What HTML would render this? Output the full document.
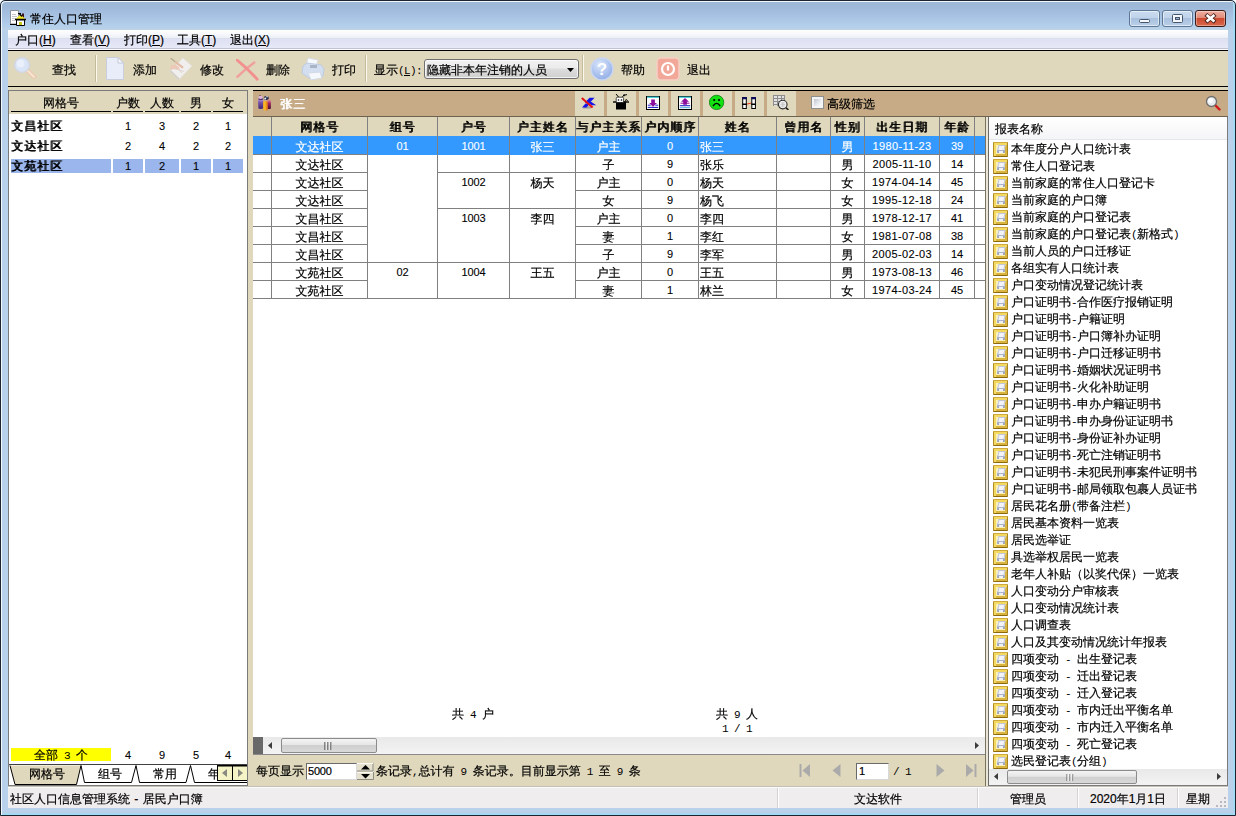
<!DOCTYPE html>
<html lang="zh-CN"><head><meta charset="utf-8"><title>常住人口管理</title>
<style>
html,body{margin:0;padding:0}
body{width:1236px;height:816px;position:relative;overflow:hidden;background:#fff;font:12px/12px "Liberation Sans","WenQuanYi Zen Hei","Noto Sans CJK SC",sans-serif;color:#000;-webkit-text-stroke-width:.2px}
div,span,i,b,u{box-sizing:border-box}
i{font-style:normal}
b{font-weight:normal;text-shadow:1px 0 0 currentColor;letter-spacing:1px}
#win{position:absolute;left:0;top:0;width:1236px;height:816px;border-radius:5px 5px 0 0;background:#b9d1ea;overflow:hidden}
#win>*{position:absolute}
#edge{left:0;top:0;width:1236px;height:816px;border:1px solid #1c2430;border-radius:5px 5px 0 0;box-shadow:inset 1px 1px 0 0 rgba(255,255,255,.85),inset -1px -1px 0 0 #9fdcf6,inset -2px -2px 0 0 #acd6f0}
#tb{left:0;top:0;width:1236px;height:30px;background:linear-gradient(#9fb8d6 0,#9db8d9 7px,#a6c1e1 15px,#b1ceeb 25px,#bdd3e7 30px)}
#tt{position:absolute;left:30px;top:13px;white-space:nowrap}
.wb{position:absolute;top:10px;width:31px;height:17px;border:1px solid #5d7694;border-radius:3px;background:linear-gradient(#c9dbef 0,#c0d3ea 45%,#a9c1de 50%,#b9cfe8 100%);box-shadow:inset 0 0 0 1px rgba(255,255,255,.55)}
.wb.cls{border-color:#3c1c18;background:linear-gradient(#eeb0a2 0,#e08a78 45%,#cd4a2f 50%,#d9694c 100%);box-shadow:inset 0 0 0 1px rgba(255,255,255,.35)}
#menu{left:8px;top:30px;width:1220px;height:20px;background:linear-gradient(#fff 0,#f7f8fc 4px,#eef0f8 7.500px,#d8dae8 8px,#dee1f2 9px,#e6e8f7 17.500px,#c2c3ce 18px,#c2c3ce 19px,#fcfcfe 19px)}
#menu span{position:absolute;top:4px;white-space:nowrap}
.bl{left:8px;width:1220px;height:1px;background:#000}
#tool{left:8px;top:51px;width:1220px;height:35px;background:#e0d8bc}
#tool>*{position:absolute}
#tool .t{top:13px;white-space:nowrap}
.sep{top:4px;width:2px;height:27px;border-left:1px solid #c4bb9c;border-right:1px solid #fbf8ee}
#main{left:8px;top:87px;width:1220px;height:699px;background:#e0d8bc}
/* left panel */
#lp{left:8px;top:90px;width:240px;height:696px;border:1px solid #7b7b7b;background:#fff}
#lp>*{position:absolute}
#lp .hd{left:0;top:0;width:238px;height:23px;background:#e0d8bc}
#lp .hd span{position:absolute;top:6px;text-align:center;height:15px;border-bottom:1px solid #000}
#lp .r{left:0;width:238px;height:14px}
#lp .r span{position:absolute;top:0;height:14px;line-height:14px;text-align:center}
#lp .r span.nm{text-align:left}
#lp .r.s span{background:#9bb6ec}
#lp .sum{left:2px;top:657px;width:100px;height:13px;background:#ff0;text-align:center;line-height:13px;padding-top:1px;white-space:pre}
/* centre */
#ct{left:253px;top:90px;width:975px;height:27px;background:#c6ab86;border-top:1px solid #000;border-bottom:1px solid #6d6250}
#ct>*{position:absolute}
#ct .bt{top:0;width:29px;height:25px;background:#e0d8bc}
#ct .bt svg{position:absolute;left:6px;top:3px}
#grid{left:253px;top:117px;width:733px;height:620px;background:#fff;border-right:1px solid #78735f}
#grid>*{position:absolute}
.gh{left:0;top:0;width:732px;height:19px;background:#e0d8bc}
.hc{position:absolute;top:0;height:19px;border-right:0;text-align:center;line-height:19px;padding-top:1px;white-space:nowrap;overflow:visible}
.gh .hc+.hc{box-shadow:-1px 0 0 #808080}
.gr{left:0;width:732px;height:19px}
.gr .c{position:absolute;top:0;height:19px;line-height:19px;padding-top:2px;text-align:center;border-bottom:1px solid #808080;box-shadow:-1px 0 0 #808080;white-space:nowrap}
.gr .c.ind{box-shadow:none}
.gr .c.d{padding-top:1px}
.gr .c.nb{border-bottom:0}
.gr .c.l{text-align:left;padding-left:1px}
.gr.sel .c{background:#3399ff;color:#fff}
.n{font-family:"Liberation Mono","WenQuanYi Zen Hei",monospace;font-size:11px;letter-spacing:-.6px;-webkit-text-stroke-width:0;white-space:pre}
.d{font-size:11px;letter-spacing:-.12px;-webkit-text-stroke-width:.1px}
.dt{letter-spacing:.36px}
.s11{font-size:11px;letter-spacing:-.2px}
/* right panel */
#rp{left:988px;top:117px;width:240px;height:669px;background:#fff;border:1px solid #7b7b7b;border-top:0;border-left:1px solid #6c6c64}
#rp>*{position:absolute}
#rp .rh{left:0;top:0;width:238px;height:23px;line-height:24px;padding-left:6px;background:linear-gradient(#fff,#f4f5f7);border-bottom:1px solid #e3e6ea}
.ri{left:4px;height:16px;white-space:nowrap}
.ri span{position:absolute;left:18px;top:1px}
.ic{position:absolute;left:0;top:0;width:15px;height:15px;border:1px solid;border-color:#cfa93e #a9851f #8c690b #b08c25;border-radius:1px;background:#fbf0b8;box-shadow:inset 1px 1px 0 1px #f3d862,inset -1px -1px 0 1px #d9b440}
.ic i{position:absolute;left:3px;top:5px;width:8px;height:5px;border-radius:2px 2px 1px 1px;background:linear-gradient(#c9cfe0,#8e98b4)}
.ic i::before{content:"";position:absolute;left:1px;top:-3px;width:5px;height:4px;background:#f3f4f9;border:1px solid #c2c6d4;border-bottom:0;transform:skewX(-12deg)}
.ic i::after{content:"";position:absolute;left:2px;top:3px;width:4px;height:2px;background:#eef0f6}
/* status */
#st{left:8px;top:786px;width:1220px;height:22px;background:#f0edee;border-top:1px solid #c4c0b6;box-shadow:inset 0 1px 0 #fbfafa}
#st span{position:absolute;top:6px;white-space:nowrap;word-spacing:1px}
#st i{position:absolute;top:1px;width:2px;height:20px;border-left:1px solid #d5d2d3;border-right:1px solid #fff}
/* scrollbars */
.sb{background:linear-gradient(#e9e9e9,#f3f3f3)}
.th{position:absolute;border:1px solid #8c8c8c;border-radius:2px;background:linear-gradient(#f4f4f4 0,#e6e6e6 45%,#cfcfcf 50%,#d9d9d9 100%)}
#cb{left:416px;top:8px;width:155px;height:20px;border:1px solid #707070;border-radius:3px;background:linear-gradient(#f2f2f2 0,#ebebeb 45%,#dddddd 50%,#cfcfcf 100%);box-shadow:inset 0 0 0 1px rgba(255,255,255,.7)}
#cb span{position:absolute;left:2px;top:4px;white-space:nowrap}
#cb svg{position:absolute;left:142px;top:8px}
.ft{text-align:center;white-space:pre}
#pg>*{position:absolute;white-space:pre}
.inp{background:#fff;border:1px solid #6a6a6a;border-right-color:#d8d8d8;border-bottom-color:#d8d8d8}
.inp span{position:absolute}

</style></head>
<body>
<div id="win">
<div id="tb">
<svg style="position:absolute;left:10px;top:10px" width="17" height="17" viewBox="0 0 17 17"><path d="M.500 .500H8.500V14H.500Z" fill="#fdfdfd" stroke="#8a8f98" stroke-width="1"/><path d="M0 14.500H9" stroke="#000" stroke-width="1.200"/><path d="M2 4.500H6M2 6.500H7M2 8.500H6M2 10.500H5" stroke="#b4b8c0" stroke-width=".8"/><path d="M12 3.500H14V8H12Z" fill="#3a1418"/><path d="M8 3.500H11" stroke="#000" stroke-width="1.200"/><path d="M10.500 4.500 15.500 9.500H5.500Z" fill="#f2ea2c" stroke="#e8e040" stroke-width=".5"/><path d="M9.500 4 12 6.500" stroke="#000" stroke-width="1.400"/><path d="M5 9.500H16" stroke="#000" stroke-width="1.300"/><path d="M6.500 10H14.500V15.500H6.500Z" fill="#fff" stroke="#000" stroke-width="1"/><path d="M9 12H12V15H9Z" fill="#c8c81a"/></svg>
<span id="tt">常住人口管理</span>
<div class="wb" style="left:1129px"><svg width="29" height="15" style="position:absolute;left:0;top:0"><rect x="9.500" y="8.500" width="10" height="3" rx="1" fill="#f4f7fb" stroke="#45556b"/></svg></div>
<div class="wb" style="left:1162px"><svg width="29" height="15" style="position:absolute;left:0;top:0"><rect x="9.500" y="3.500" width="10" height="8" rx="1" fill="#f4f7fb" stroke="#45556b"/><rect x="12.500" y="6.500" width="4" height="2" fill="#9fb6d2" stroke="#45556b"/></svg></div>
<div class="wb cls" style="left:1195px"><svg width="29" height="15" style="position:absolute;left:0;top:0"><path d="M9.800 3.500 19.200 11.200M19.200 3.500 9.800 11.200" stroke="#4a2420" stroke-width="4.200" stroke-linecap="butt"/><path d="M10.600 4.100 18.400 10.600M18.400 4.100 10.600 10.600" stroke="#fff" stroke-width="2.600" stroke-linecap="butt"/></svg></div>
</div>
<div id="menu"><span style="left:7px">户口(<u>H</u>)</span><span style="left:62px">查看(<u>V</u>)</span><span style="left:116px">打印(<u>P</u>)</span><span style="left:169px">工具(<u>T</u>)</span><span style="left:222px">退出(<u>X</u>)</span></div>
<div class="bl" style="top:50px"></div>
<div id="tool">
<svg style="left:5px;top:5px" width="24" height="24" viewBox="0 0 24 24"><path d="M13.500 13.500 21 21" stroke="#e9c9ae" stroke-width="4.500" stroke-linecap="round"/><path d="M13.500 13.500 21 21" stroke="#f6e4d3" stroke-width="2" stroke-linecap="round"/><circle cx="9" cy="9" r="7.500" fill="#d9e4f7" stroke="#d3d6de" stroke-width="1.500"/><circle cx="7.500" cy="7.500" r="4" fill="#eaf0fb"/></svg>
<span class="t" style="left:44px">查找</span>
<i class="sep" style="left:87px"></i>
<svg style="left:98px;top:6px" width="19" height="24" viewBox="0 0 19 24"><path d="M.500 .500H12L17.500 6V22.500H.500Z" fill="#e9edfa" stroke="#c9cedd"/><path d="M12 .500V6H17.500Z" fill="#f6f8fd" stroke="#c3c8d6"/></svg>
<span class="t" style="left:125px">添加</span>
<svg style="left:160px;top:6px" width="26" height="25" viewBox="0 0 26 25"><path d="M1.800 14.400 14.900 .800 24.100 9.100 10.500 23.200Z" fill="#f1efee" stroke="#dddad2" stroke-width=".8"/><path d="M1.800 14.400 10.500 23.200 11.500 21.500 3 13.200Z" fill="#d3d0c8"/><path d="M6 11.500 16 14.500M8 9.500 14 16" stroke="#dcd6d2" stroke-width="1"/><path d="M2.500 8.500Q7 6.500 10.500 9.500L12 12.500Q7 11.500 2.500 12.500Z" fill="#ecc8b6"/><path d="M2.700 1.300 14.400 10.200" stroke="#b0a58e" stroke-width="1.300"/><path d="M7 4.500 15 10.800" stroke="#e6bca8" stroke-width="2.200"/></svg>
<span class="t" style="left:192px">修改</span>
<svg style="left:228px;top:8px" width="23" height="22" viewBox="0 0 23 22"><path d="M18.300 3.400Q9 10 1.300 17.800" stroke="#f0a09c" stroke-width="2.400" stroke-linecap="round" fill="none"/><path d="M.800 .800Q11 9 21.200 20.200" stroke="#f28f8f" stroke-width="2.800" stroke-linecap="round" fill="none"/></svg>
<span class="t" style="left:258px">删除</span>
<svg style="left:293px;top:6px" width="24" height="24" viewBox="0 0 24 24"><path d="M7 1 17 3 15 10 5 8Z" fill="#f7f9fc" stroke="#d5dbe6"/><path d="M2 9 6 6 20 8 23 12 22 19 8 21 1 16Z" fill="#d3dff0" stroke="#bccbe2"/><path d="M9 8h7v3h-7z" fill="#aab4c4"/><path d="M7 16 19 15 21 21 10 23Z" fill="#f4f7fb" stroke="#d2d9e5"/></svg>
<span class="t" style="left:324px">打印</span>
<i class="sep" style="left:357px"></i>
<span class="t" style="left:366px">显示<i class="n">(<u>L</u>):</i></span>
<div id="cb"><span>隐藏非本年注销的人员</span><svg width="7" height="4" viewBox="0 0 7 4"><path d="M0 0H7L3.500 4Z" fill="#000"/></svg></div>
<i class="sep" style="left:574px"></i>
<svg style="left:582px;top:6px" width="24" height="24" viewBox="0 0 24 24"><defs><radialGradient id="hg" cx=".4" cy=".3" r=".8"><stop offset="0" stop-color="#dbe6fa"/><stop offset=".6" stop-color="#a9c0ee"/><stop offset="1" stop-color="#8aa8e2"/></radialGradient></defs><circle cx="12" cy="12" r="11" fill="url(#hg)" stroke="#c9d6f0" stroke-width="1.500"/><text x="12" y="18" text-anchor="middle" font-family="Liberation Sans,sans-serif" font-weight="bold" font-size="17" fill="#fff">?</text></svg>
<span class="t" style="left:613px">帮助</span>
<svg style="left:648px;top:6px" width="24" height="24" viewBox="0 0 24 24"><rect x="1" y="1" width="22" height="22" rx="4" fill="#f2a898" stroke="#f6cfc4" stroke-width="1.500"/><circle cx="12" cy="12" r="6" fill="none" stroke="#fff" stroke-width="2.200"/><path d="M12 8.500V13.500" stroke="#fff" stroke-width="2.200"/></svg>
<span class="t" style="left:679px">退出</span>
</div>
<div class="bl" style="top:86px"></div>
<div id="main"></div>
<div id="lp">
<div class="hd"><span style="left:2px;width:100px">网格号</span><span style="left:104px;width:30px">户数</span><span style="left:136px;width:34px">人数</span><span style="left:172px;width:30px">男</span><span style="left:204px;width:30px">女</span></div>
<div class="r" style="top:28px"><span class="nm" style="left:2px;width:100px"><b>文昌社区</b></span><span class="d" style="left:104px;width:30px">1</span><span class="d" style="left:136px;width:34px">3</span><span class="d" style="left:172px;width:30px">2</span><span class="d" style="left:204px;width:30px">1</span></div>
<div class="r" style="top:48px"><span class="nm" style="left:2px;width:100px"><b>文达社区</b></span><span class="d" style="left:104px;width:30px">2</span><span class="d" style="left:136px;width:34px">4</span><span class="d" style="left:172px;width:30px">2</span><span class="d" style="left:204px;width:30px">2</span></div>
<div class="r s" style="top:68px"><span class="nm" style="left:2px;width:100px"><b>文苑社区</b></span><span class="d" style="left:104px;width:30px">1</span><span class="d" style="left:136px;width:34px">2</span><span class="d" style="left:172px;width:30px">1</span><span class="d" style="left:204px;width:30px">1</span></div>
<div class="sum">全部<i class="n"> 3 </i>个</div>
<div class="r" style="top:657px"><span class="d" style="left:104px;width:30px">4</span><span class="d" style="left:136px;width:34px">9</span><span class="d" style="left:172px;width:30px">5</span><span class="d" style="left:204px;width:30px">4</span></div>
<div style="left:0;top:673px;width:238px;height:1px;background:#404040"></div>
<svg style="left:0;top:674px" width="238" height="21" viewBox="0 0 238 21"><path d="M1 .500 6 19.500H67.500L72 .500" fill="#e0d8bc" stroke="#000"/><path d="M72 .500 75.500 17.500H122.500L127 .500 130.500 17.500H177L181.500 .500 185.500 17.500H238" fill="none" stroke="#000"/></svg>
<span style="left:20px;top:677px">网格号</span><span style="left:89px;top:677px">组号</span><span style="left:144px;top:677px">常用</span><span style="left:199px;top:677px">年</span>
<div style="left:208px;top:674px;width:30px;height:16px;border:1px solid #000;border-right:0;background:#000"><svg style="position:absolute;left:0;top:0" width="29" height="14" viewBox="0 0 29 14"><rect x="0" y=".500" width="14" height="13.500" fill="#f4f4c6"/><rect x="15" y=".500" width="14" height="13.500" fill="#f4f4c6"/><path d="M9 3V11L4 7Z" fill="#8a8a80"/><path d="M20 3V11L25 7Z" fill="#8a8a80"/></svg></div>
</div>
<div id="ct">
<svg style="left:4px;top:4px" width="16" height="17" viewBox="0 0 16 17"><defs><linearGradient id="g1" x1="0" y1="0" x2="0" y2="1"><stop offset="0" stop-color="#c9a0dc"/><stop offset=".35" stop-color="#7a55a8"/><stop offset="1" stop-color="#3e2270"/></linearGradient><linearGradient id="g2" x1="0" y1="0" x2="1" y2="0"><stop offset="0" stop-color="#f0a020"/><stop offset=".4" stop-color="#f8c028"/><stop offset="1" stop-color="#e05a18"/></linearGradient><linearGradient id="g3" x1="0" y1="0" x2="0" y2="1"><stop offset="0" stop-color="#e88aa0"/><stop offset=".4" stop-color="#a02860"/><stop offset="1" stop-color="#4a1030"/></linearGradient></defs><path d="M10.400 5.500Q12.500 3.800 13.900 6V13.500Q12 14.500 10.400 13.500Z" fill="url(#g3)"/><ellipse cx="3.500" cy="2.400" rx="2.100" ry="1.700" fill="#e2b4e0"/><path d="M2 .500 3 -.500 4 .800" fill="#3a2a4a"/><path d="M1 4.500Q3.500 3 6.200 4.500V13.600Q3.500 14.500 1.400 13.600Z" fill="url(#g1)"/><path d="M1.500 4Q3.500 5 6 4" stroke="#2e1a55" stroke-width="1" fill="none"/><path d="M6 7Q8.500 5 10.800 7V15Q8.500 16.200 6.300 15Z" fill="url(#g2)"/><ellipse cx="9.300" cy="3" rx="2.600" ry="2.100" fill="#252848"/><circle cx="8.200" cy="3.600" r="1" fill="#f4f4fa"/><circle cx="10" cy="1.800" r=".8" fill="#e8e8f4"/></svg>
<span style="left:27px;top:7px;color:#fff;white-space:nowrap"><b>张三</b></span>
<div class="bt" style="left:322px"><svg width="16" height="16" viewBox="0 0 16 16"><path d="M1.500 14.500 4 12.500H11.500L9.500 14.500Z" fill="#9c9c9c"/><path d="M8.500 3.800H13.600L8.800 8.800H3.700Z" fill="#1616e8"/><path d="M6 8H10.500L15.200 11.200H10.700Z" fill="#1616e8"/><path d="M4.500 9.500H9L5.500 13.400H1Z" fill="#1616e8"/><path d="M.800 4 11.600 13.400" stroke="#e61212" stroke-width="2"/></svg></div>
<div class="bt" style="left:354px"><svg width="16" height="16" viewBox="0 0 16 16"><path d="M3 7.500H13V15.500H3Z" fill="#000"/><path d="M0 8H16" stroke="#000" stroke-width="1.400"/><path d="M3.200 8.500V4.600Q3.200 3.200 4.600 3.200H9.200Q10.600 3.200 10.600 4.600V8.500Z" fill="#fff" stroke="#000" stroke-width=".7"/><path d="M3 0 5.500 3M11.500 0 9.500 3M11 2 13 .500 14 1" stroke="#000" stroke-width="1" fill="none"/><circle cx="5.500" cy="6" r=".8" fill="#000"/><circle cx="8.500" cy="6" r=".8" fill="#000"/><path d="M12 6.500Q14 4.500 14.500 7" stroke="#000" stroke-width="1" fill="none"/></svg></div>
<div class="bt" style="left:386px"><svg width="16" height="16" viewBox="0 0 16 16"><rect x="1.500" y="2.500" width="13" height="13" fill="#fff" stroke="#000"/><path d="M2 3.200H14" stroke="#3cc8d2" stroke-width="1.300"/><path d="M6.200 5.500H9.900V9H12L8 12.800 4.100 9H6.200Z" fill="#8c0c9c"/><path d="M2.800 11.200H5.700M10.300 11.200H13.200" stroke="#2222c8" stroke-width="1"/><path d="M2.800 13.400H13.200" stroke="#2222c8" stroke-width="1.100"/></svg></div>
<div class="bt" style="left:418px"><svg width="16" height="16" viewBox="0 0 16 16"><rect x="1.500" y="2.500" width="13" height="13" fill="#fff" stroke="#000"/><path d="M2 3.200H14" stroke="#3cc8d2" stroke-width="1.300"/><path d="M8 4 12 7.800H9.900V10.700H6.200V7.800H4.100Z" fill="#8c0c9c"/><path d="M3.500 9.200H12.500" stroke="#8c0c9c" stroke-width="1"/><path d="M2.800 11.700H13.200" stroke="#2222c8" stroke-width="1.100"/><path d="M2.800 13.700H13.200" stroke="#4aa8dc" stroke-width="1"/></svg></div>
<div class="bt" style="left:450px"><svg width="16" height="16" viewBox="0 0 16 16"><circle cx="7.600" cy="8.400" r="7.200" fill="#12e212" stroke="#0c7c0c" stroke-width=".8"/><circle cx="5.200" cy="6" r="1.100" fill="#000"/><circle cx="10" cy="6" r="1.100" fill="#000"/><path d="M4 12Q7.600 6.800 11.200 12" fill="none" stroke="#000" stroke-width="1.400"/></svg></div>
<div class="bt" style="left:482px"><svg width="16" height="16" viewBox="0 0 16 16"><path d="M5.500 10.200 10.500 9" stroke="#e8401c" stroke-width="1"/><rect x="1.700" y="3.500" width="3.600" height="11" fill="#fff" stroke="#000"/><rect x="10.800" y="3.500" width="3.600" height="11" fill="#fff" stroke="#000"/><path d="M1.200 4.200H5.800M10.300 4.200H14.900" stroke="#0c0c5a" stroke-width="2.200"/><path d="M1.200 10.200H5.800M10.300 10.200H14.900" stroke="#000" stroke-width="1.600"/></svg></div>
<div class="bt" style="left:514px"><svg width="16" height="16" viewBox="0 0 16 16"><rect x=".500" y="1.500" width="11" height="10" fill="#e2e2e2"/><path d="M0 1.500H12M0 4.500H12M0 7.500H12M0 10.500H7M.500 1V12M4.500 1V12M8.500 1V8M11.500 1V7" stroke="#8e8e8e" stroke-width="1" fill="none"/><circle cx="9.750" cy="10.600" r="4.300" fill="#f1f1f1" stroke="#2c2c2c" stroke-width="1.100"/><path d="M7.200 10.600H12.300M9.750 8V13.200M7.800 9H11.700M7.800 12.200H11.700" stroke="#bdbdbd" stroke-width=".7"/><path d="M13 13.800 15.400 15.900" stroke="#1c1c1c" stroke-width="1.600"/></svg></div>
<div style="left:558px;top:5px;width:13px;height:13px;border:1px solid #8e8f8f;background:#f4f4f4;padding:0"><div style="position:absolute;left:2px;top:2px;width:7px;height:7px;background:linear-gradient(135deg,#bfc4cf,#e4e7ec 55%,#fafbfc)"></div></div>
<span style="left:574px;top:7px;white-space:nowrap">高级筛选</span>
<svg style="left:952px;top:4px" width="16" height="16" viewBox="0 0 16 16"><path d="M9.500 9.500 14.500 14.500" stroke="#d01818" stroke-width="2.400" stroke-linecap="round"/><circle cx="6.500" cy="6.500" r="5" fill="#e8ecef" stroke="#6e6e6e" stroke-width="1.300"/><circle cx="5.500" cy="5.500" r="2.500" fill="#fafcfd"/></svg>
</div>
<div id="grid">
<div class="gh"><div class="hc" style="left:0px;width:18px"><b></b></div><div class="hc" style="left:19px;width:95px"><b>网格号</b></div><div class="hc" style="left:115px;width:69px"><b>组号</b></div><div class="hc" style="left:185px;width:71px"><b>户号</b></div><div class="hc" style="left:257px;width:65px"><b>户主姓名</b></div><div class="hc" style="left:323px;width:65px"><b>与户主关系</b></div><div class="hc" style="left:389px;width:56px"><b>户内顺序</b></div><div class="hc" style="left:446px;width:77px"><b>姓名</b></div><div class="hc" style="left:524px;width:53px"><b>曾用名</b></div><div class="hc" style="left:578px;width:33px"><b>性别</b></div><div class="hc" style="left:612px;width:74px"><b>出生日期</b></div><div class="hc" style="left:687px;width:34px"><b>年龄</b></div><div class="hc" style="left:722px;width:10px"><b></b></div></div>
<div class="gr sel" style="top:19px"><div class="c ind" style="left:0;width:18px"></div><div class="c" style="left:19px;width:95px">文达社区</div><div class="c nb d" style="left:115px;width:69px">01</div><div class="c nb d" style="left:185px;width:71px">1001</div><div class="c nb" style="left:257px;width:65px">张三</div><div class="c" style="left:323px;width:65px">户主</div><div class="c d" style="left:389px;width:56px">0</div><div class="c l" style="left:446px;width:77px">张三</div><div class="c" style="left:524px;width:53px"></div><div class="c" style="left:578px;width:33px">男</div><div class="c d dt" style="left:612px;width:74px">1980-11-23</div><div class="c d" style="left:687px;width:34px">39</div><div class="c" style="left:722px;width:10px"></div></div>
<div class="gr" style="top:37px"><div class="c ind" style="left:0;width:18px"></div><div class="c" style="left:19px;width:95px">文达社区</div><div class="c nb d" style="left:115px;width:69px"></div><div class="c d" style="left:185px;width:71px"></div><div class="c" style="left:257px;width:65px"></div><div class="c" style="left:323px;width:65px">子</div><div class="c d" style="left:389px;width:56px">9</div><div class="c l" style="left:446px;width:77px">张乐</div><div class="c" style="left:524px;width:53px"></div><div class="c" style="left:578px;width:33px">男</div><div class="c d dt" style="left:612px;width:74px">2005-11-10</div><div class="c d" style="left:687px;width:34px">14</div><div class="c" style="left:722px;width:10px"></div></div>
<div class="gr" style="top:55px"><div class="c ind" style="left:0;width:18px"></div><div class="c" style="left:19px;width:95px">文达社区</div><div class="c nb d" style="left:115px;width:69px"></div><div class="c nb d" style="left:185px;width:71px">1002</div><div class="c nb" style="left:257px;width:65px">杨天</div><div class="c" style="left:323px;width:65px">户主</div><div class="c d" style="left:389px;width:56px">0</div><div class="c l" style="left:446px;width:77px">杨天</div><div class="c" style="left:524px;width:53px"></div><div class="c" style="left:578px;width:33px">女</div><div class="c d dt" style="left:612px;width:74px">1974-04-14</div><div class="c d" style="left:687px;width:34px">45</div><div class="c" style="left:722px;width:10px"></div></div>
<div class="gr" style="top:73px"><div class="c ind" style="left:0;width:18px"></div><div class="c" style="left:19px;width:95px">文达社区</div><div class="c nb d" style="left:115px;width:69px"></div><div class="c d" style="left:185px;width:71px"></div><div class="c" style="left:257px;width:65px"></div><div class="c" style="left:323px;width:65px">女</div><div class="c d" style="left:389px;width:56px">9</div><div class="c l" style="left:446px;width:77px">杨飞</div><div class="c" style="left:524px;width:53px"></div><div class="c" style="left:578px;width:33px">女</div><div class="c d dt" style="left:612px;width:74px">1995-12-18</div><div class="c d" style="left:687px;width:34px">24</div><div class="c" style="left:722px;width:10px"></div></div>
<div class="gr" style="top:91px"><div class="c ind" style="left:0;width:18px"></div><div class="c" style="left:19px;width:95px">文昌社区</div><div class="c nb d" style="left:115px;width:69px"></div><div class="c nb d" style="left:185px;width:71px">1003</div><div class="c nb" style="left:257px;width:65px">李四</div><div class="c" style="left:323px;width:65px">户主</div><div class="c d" style="left:389px;width:56px">0</div><div class="c l" style="left:446px;width:77px">李四</div><div class="c" style="left:524px;width:53px"></div><div class="c" style="left:578px;width:33px">男</div><div class="c d dt" style="left:612px;width:74px">1978-12-17</div><div class="c d" style="left:687px;width:34px">41</div><div class="c" style="left:722px;width:10px"></div></div>
<div class="gr" style="top:109px"><div class="c ind" style="left:0;width:18px"></div><div class="c" style="left:19px;width:95px">文昌社区</div><div class="c nb d" style="left:115px;width:69px"></div><div class="c nb d" style="left:185px;width:71px"></div><div class="c nb" style="left:257px;width:65px"></div><div class="c" style="left:323px;width:65px">妻</div><div class="c d" style="left:389px;width:56px">1</div><div class="c l" style="left:446px;width:77px">李红</div><div class="c" style="left:524px;width:53px"></div><div class="c" style="left:578px;width:33px">女</div><div class="c d dt" style="left:612px;width:74px">1981-07-08</div><div class="c d" style="left:687px;width:34px">38</div><div class="c" style="left:722px;width:10px"></div></div>
<div class="gr" style="top:127px"><div class="c ind" style="left:0;width:18px"></div><div class="c" style="left:19px;width:95px">文昌社区</div><div class="c d" style="left:115px;width:69px"></div><div class="c d" style="left:185px;width:71px"></div><div class="c" style="left:257px;width:65px"></div><div class="c" style="left:323px;width:65px">子</div><div class="c d" style="left:389px;width:56px">9</div><div class="c l" style="left:446px;width:77px">李军</div><div class="c" style="left:524px;width:53px"></div><div class="c" style="left:578px;width:33px">男</div><div class="c d dt" style="left:612px;width:74px">2005-02-03</div><div class="c d" style="left:687px;width:34px">14</div><div class="c" style="left:722px;width:10px"></div></div>
<div class="gr" style="top:145px"><div class="c ind" style="left:0;width:18px"></div><div class="c" style="left:19px;width:95px">文苑社区</div><div class="c nb d" style="left:115px;width:69px">02</div><div class="c nb d" style="left:185px;width:71px">1004</div><div class="c nb" style="left:257px;width:65px">王五</div><div class="c" style="left:323px;width:65px">户主</div><div class="c d" style="left:389px;width:56px">0</div><div class="c l" style="left:446px;width:77px">王五</div><div class="c" style="left:524px;width:53px"></div><div class="c" style="left:578px;width:33px">男</div><div class="c d dt" style="left:612px;width:74px">1973-08-13</div><div class="c d" style="left:687px;width:34px">46</div><div class="c" style="left:722px;width:10px"></div></div>
<div class="gr" style="top:163px"><div class="c ind" style="left:0;width:18px"></div><div class="c" style="left:19px;width:95px">文苑社区</div><div class="c d" style="left:115px;width:69px"></div><div class="c d" style="left:185px;width:71px"></div><div class="c" style="left:257px;width:65px"></div><div class="c" style="left:323px;width:65px">妻</div><div class="c d" style="left:389px;width:56px">1</div><div class="c l" style="left:446px;width:77px">林兰</div><div class="c" style="left:524px;width:53px"></div><div class="c" style="left:578px;width:33px">女</div><div class="c d dt" style="left:612px;width:74px">1974-03-24</div><div class="c d" style="left:687px;width:34px">45</div><div class="c" style="left:722px;width:10px"></div></div>
</div>
<span class="ft" style="left:437px;top:708px;width:72px">共<i class="n"> 4 </i>户</span>
<span class="ft" style="left:698px;top:708px;width:78px">共<i class="n"> 9 </i>人</span>
<span class="ft" style="left:698px;top:722px;width:78px"><i class="n">1 / 1</i></span>
<div id="hs" class="sb" style="left:253px;top:737px;width:733px;height:17px">
<div style="position:absolute;left:0;top:0;width:10px;height:17px;background:#696969"></div>
<svg style="position:absolute;left:15px;top:5px" width="4" height="7" viewBox="0 0 4 7"><path d="M4 0V7L0 3.500Z" fill="#3c3c3c"/></svg>
<div class="th" style="left:28px;top:1px;width:96px;height:15px"><svg style="position:absolute;left:42px;top:3px" width="8" height="8" viewBox="0 0 8 8"><path d="M1 0V8M4 0V8M7 0V8" stroke="#4a4a4a" stroke-width="1.200"/><path d="M2 0V8M5 0V8M8 0V8" stroke="#fff" stroke-width=".8"/></svg></div>
<svg style="position:absolute;left:722px;top:5px" width="4" height="7" viewBox="0 0 4 7"><path d="M0 0V7L4 3.500Z" fill="#3c3c3c"/></svg>
</div>
<div style="left:253px;top:754px;width:733px;height:1px;background:#8a8a8a"></div>
<div style="left:985px;top:117px;width:1px;height:669px;background:#78735f"></div><div style="left:986px;top:117px;width:2px;height:669px;background:#e9e5d8"></div>
<div id="pg" style="left:253px;top:755px;width:732px;height:31px">
<span style="left:3px;top:10px">每页显示</span>
<div class="inp" style="left:53px;top:8px;width:51px;height:17px"><span class="s11" style="left:1px;top:1px">5000</span></div>
<div class="spn" style="left:104px;top:8px"><svg width="17" height="17" viewBox="0 0 17 17"><rect x="0" y="0" width="17" height="17" fill="#e6e1cf"/><path d="M0 8H16M16 0V8" stroke="#8e8b80" stroke-width="1" fill="none"/><path d="M0 16.500H16.500V9" stroke="#8e8b80" stroke-width="1" fill="none"/><path d="M0 .500H16M0 9.500H16" stroke="#fbfaf4" stroke-width="1"/><path d="M4 6.500H13L8.500 2Z" fill="#000"/><path d="M4 11H13L8.500 15.500Z" fill="#000"/></svg></div>
<span style="left:123px;top:10px">条记录<i class="n" style="letter-spacing:-3.300px">, </i>总计有<i class="n"> 9 </i>条记录。目前显示第<i class="n"> 1 </i>至<i class="n"> 9 </i>条</span>
<svg style="left:546px;top:9px" width="12" height="13" viewBox="0 0 12 13"><path d="M1.500 0V13" stroke="#aaa" stroke-width="2"/><path d="M11 0V13L3.500 6.500Z" fill="#aaa"/></svg>
<svg style="left:579px;top:9px" width="9" height="13" viewBox="0 0 9 13"><path d="M8.500 0V13L.500 6.500Z" fill="#aaa"/></svg>
<div class="inp" style="left:603px;top:8px;width:33px;height:17px"><span class="s11" style="left:2px;top:1px">1</span></div>
<span style="left:640px;top:10px"><i class="n">/ 1</i></span>
<svg style="left:683px;top:9px" width="9" height="13" viewBox="0 0 9 13"><path d="M.500 0V13L8.500 6.500Z" fill="#aaa"/></svg>
<svg style="left:712px;top:9px" width="12" height="13" viewBox="0 0 12 13"><path d="M10.500 0V13" stroke="#aaa" stroke-width="2"/><path d="M1 0V13L8.500 6.500Z" fill="#aaa"/></svg>
</div>
<div id="rp"><div class="rh">报表名称</div>
<div class="ri" style="top:25px"><i class="ic"><i></i></i><span>本年度分户人口统计表</span></div>
<div class="ri" style="top:42px"><i class="ic"><i></i></i><span>常住人口登记表</span></div>
<div class="ri" style="top:59px"><i class="ic"><i></i></i><span>当前家庭的常住人口登记卡</span></div>
<div class="ri" style="top:76px"><i class="ic"><i></i></i><span>当前家庭的户口簿</span></div>
<div class="ri" style="top:93px"><i class="ic"><i></i></i><span>当前家庭的户口登记表</span></div>
<div class="ri" style="top:110px"><i class="ic"><i></i></i><span>当前家庭的户口登记表<i class="n">(</i>新格式<i class="n">)</i></span></div>
<div class="ri" style="top:127px"><i class="ic"><i></i></i><span>当前人员的户口迁移证</span></div>
<div class="ri" style="top:144px"><i class="ic"><i></i></i><span>各组实有人口统计表</span></div>
<div class="ri" style="top:161px"><i class="ic"><i></i></i><span>户口变动情况登记统计表</span></div>
<div class="ri" style="top:178px"><i class="ic"><i></i></i><span>户口证明书<i class="n">-</i>合作医疗报销证明</span></div>
<div class="ri" style="top:195px"><i class="ic"><i></i></i><span>户口证明书<i class="n">-</i>户籍证明</span></div>
<div class="ri" style="top:212px"><i class="ic"><i></i></i><span>户口证明书<i class="n">-</i>户口簿补办证明</span></div>
<div class="ri" style="top:229px"><i class="ic"><i></i></i><span>户口证明书<i class="n">-</i>户口迁移证明书</span></div>
<div class="ri" style="top:246px"><i class="ic"><i></i></i><span>户口证明书<i class="n">-</i>婚姻状况证明书</span></div>
<div class="ri" style="top:263px"><i class="ic"><i></i></i><span>户口证明书<i class="n">-</i>火化补助证明</span></div>
<div class="ri" style="top:280px"><i class="ic"><i></i></i><span>户口证明书<i class="n">-</i>申办户籍证明书</span></div>
<div class="ri" style="top:297px"><i class="ic"><i></i></i><span>户口证明书<i class="n">-</i>申办身份证证明书</span></div>
<div class="ri" style="top:314px"><i class="ic"><i></i></i><span>户口证明书<i class="n">-</i>身份证补办证明</span></div>
<div class="ri" style="top:331px"><i class="ic"><i></i></i><span>户口证明书<i class="n">-</i>死亡注销证明书</span></div>
<div class="ri" style="top:348px"><i class="ic"><i></i></i><span>户口证明书<i class="n">-</i>未犯民刑事案件证明书</span></div>
<div class="ri" style="top:365px"><i class="ic"><i></i></i><span>户口证明书<i class="n">-</i>邮局领取包裹人员证书</span></div>
<div class="ri" style="top:382px"><i class="ic"><i></i></i><span>居民花名册<i class="n">(</i>带备注栏<i class="n">)</i></span></div>
<div class="ri" style="top:399px"><i class="ic"><i></i></i><span>居民基本资料一览表</span></div>
<div class="ri" style="top:416px"><i class="ic"><i></i></i><span>居民选举证</span></div>
<div class="ri" style="top:433px"><i class="ic"><i></i></i><span>具选举权居民一览表</span></div>
<div class="ri" style="top:450px"><i class="ic"><i></i></i><span>老年人补贴（以奖代保）一览表</span></div>
<div class="ri" style="top:467px"><i class="ic"><i></i></i><span>人口变动分户审核表</span></div>
<div class="ri" style="top:484px"><i class="ic"><i></i></i><span>人口变动情况统计表</span></div>
<div class="ri" style="top:501px"><i class="ic"><i></i></i><span>人口调查表</span></div>
<div class="ri" style="top:518px"><i class="ic"><i></i></i><span>人口及其变动情况统计年报表</span></div>
<div class="ri" style="top:535px"><i class="ic"><i></i></i><span>四项变动<i class="n"> - </i>出生登记表</span></div>
<div class="ri" style="top:552px"><i class="ic"><i></i></i><span>四项变动<i class="n"> - </i>迁出登记表</span></div>
<div class="ri" style="top:569px"><i class="ic"><i></i></i><span>四项变动<i class="n"> - </i>迁入登记表</span></div>
<div class="ri" style="top:586px"><i class="ic"><i></i></i><span>四项变动<i class="n"> - </i>市内迁出平衡名单</span></div>
<div class="ri" style="top:603px"><i class="ic"><i></i></i><span>四项变动<i class="n"> - </i>市内迁入平衡名单</span></div>
<div class="ri" style="top:620px"><i class="ic"><i></i></i><span>四项变动<i class="n"> - </i>死亡登记表</span></div>
<div class="ri" style="top:637px"><i class="ic"><i></i></i><span>选民登记表<i class="n">(</i>分组<i class="n">)</i></span></div>
<div class="sb" style="left:0;top:652px;width:238px;height:16px">
<svg style="position:absolute;left:5px;top:4px" width="4" height="7" viewBox="0 0 4 7"><path d="M4 0V7L0 3.500Z" fill="#3c3c3c"/></svg>
<div class="th" style="left:18px;top:1px;width:130px;height:14px"><svg style="position:absolute;left:58px;top:3px" width="8" height="7" viewBox="0 0 8 7"><path d="M1 0V7M4 0V7M7 0V7" stroke="#5a5a5a" stroke-width="1"/><path d="M2 0V7M5 0V7M8 0V7" stroke="#fff" stroke-width="1"/></svg></div>
<svg style="position:absolute;left:228px;top:4px" width="4" height="7" viewBox="0 0 4 7"><path d="M0 0V7L4 3.500Z" fill="#3c3c3c"/></svg>
</div>
</div>
<div id="st"><span style="left:2px">社区人口信息管理系统 - 居民户口簿</span><i style="left:769px"></i><span style="left:770px;width:200px;text-align:center">文达软件</span><i style="left:969px"></i><span style="left:970px;width:100px;text-align:center">管理员</span><i style="left:1069px"></i><span style="left:1070px;width:100px;text-align:center">2020年1月1日</span><i style="left:1169px"></i><span style="left:1178px">星期</span>
<svg style="position:absolute;left:1207px;top:9px" width="12" height="12" viewBox="0 0 12 12"><path d="M9 1h2v2h-2zM9 5h2v2h-2zM9 9h2v2h-2zM5 5h2v2h-2zM5 9h2v2h-2zM1 9h2v2h-2z" fill="#b8b8c0"/></svg>
</div>
<div id="edge"></div>
</div>
</body></html>
